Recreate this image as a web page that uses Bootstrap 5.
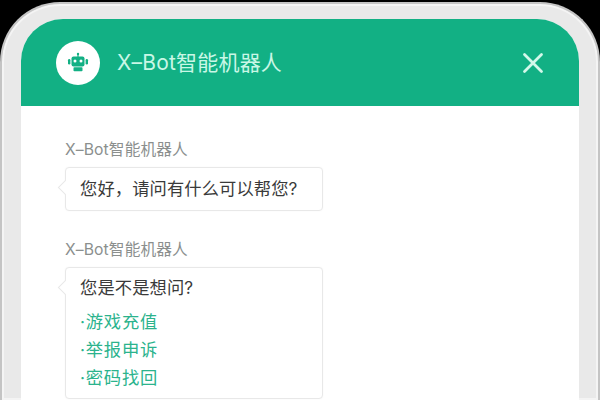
<!DOCTYPE html>
<html lang="zh">
<head>
<meta charset="utf-8">
<title>X-Bot</title>
<link href="https://cdn.jsdelivr.net/npm/bootstrap@5.3.0/dist/css/bootstrap.min.css" rel="stylesheet">
<style>
html,body{width:600px;height:400px;overflow:hidden;background:#000;font-family:Inter,"Noto Sans CJK SC",sans-serif}
.phone-shell{width:600px;height:398px;padding:15px 19px 0 19px;background:#e9e9e9;border:2px solid #c4c4c4;border-bottom:0;border-radius:60px 60px 0 0;box-shadow:inset 0 0 0 2px #f4f4f4;margin-top:2px}
.chat-win{height:100%;background:#fff;border-radius:42px 42px 0 0;overflow:hidden}
.chat-head{height:87px;background:#12b084;padding:1px 35px 0;color:#c9f7e6}
.bot-disc{width:44px;height:44px;background:#fff}
.head-title{font-size:21px;letter-spacing:.2px;margin-left:17px}
.chat-body{padding:34px 0 0 44px}
.sender{font-size:15.7px;letter-spacing:.1px;line-height:20px;color:#8b8f8e;margin-bottom:7px}
.bubble{position:relative;width:258px;background:#fff;border:1px solid #e8e8e8;border-radius:4px;padding:0 14px;font-size:17.3px;letter-spacing:.1px;color:#3a3a3a;box-shadow:0 0 2px rgba(0,0,0,.04)}
.bubble::before{content:"";position:absolute;left:-6px;top:14px;width:11px;height:11px;background:#fff;border-left:1px solid #e8e8e8;border-bottom:1px solid #e8e8e8;transform:rotate(45deg)}
.bubble-one{height:44px;line-height:41px;margin-bottom:29px}
.bubble-two{height:132px;padding-top:6px}
.ask{line-height:28px;margin-bottom:6px}
.opt{display:block;line-height:28px;color:#2bb38d;text-decoration:none;letter-spacing:.8px}
</style>
</head>
<body>
<div class="phone-shell">
  <div class="chat-win d-flex flex-column">
    <div class="chat-head d-flex align-items-center justify-content-between flex-shrink-0">
      <div class="d-flex align-items-center">
        <div class="bot-disc rounded-circle d-flex align-items-center justify-content-center">
          <svg width="24" height="24" viewBox="0 0 24 24" fill="#12b084" aria-hidden="true">
            <circle cx="12" cy="3" r="1.2"/><rect x="11.4" y="3" width="1.2" height="3"/>
            <path d="M7.5 5.5h9a2 2 0 0 1 2 2v6a2 2 0 0 1-2 2h-9a2 2 0 0 1-2-2v-6a2 2 0 0 1 2-2z"/>
            <rect x="2" y="8" width="2.4" height="5.5" rx="1.2"/><rect x="19.6" y="8" width="2.4" height="5.5" rx="1.2"/>
            <rect x="7.5" y="16.2" width="9" height="4" rx=".8"/>
            <circle cx="9" cy="10" r="1.5" fill="#fff"/><circle cx="15" cy="10" r="1.5" fill="#fff"/>
          </svg>
        </div>
        <span class="head-title">X–Bot智能机器人</span>
      </div>
      <svg width="22" height="22" viewBox="0 0 22 22" stroke="#d3f8ea" stroke-width="2.8" stroke-linecap="round" aria-label="关闭"><path d="M2.5 2.5 19.5 19.5M19.5 2.5 2.5 19.5"/></svg>
    </div>
    <div class="chat-body">
      <div class="sender">X–Bot智能机器人</div>
      <div class="bubble bubble-one">您好，请问有什么可以帮您?</div>
      <div class="sender">X–Bot智能机器人</div>
      <div class="bubble bubble-two">
        <div class="ask">您是不是想问?</div>
        <a class="opt" href="#">·游戏充值</a>
        <a class="opt" href="#">·举报申诉</a>
        <a class="opt" href="#">·密码找回</a>
      </div>
    </div>
  </div>
</div>
</body>
</html>
